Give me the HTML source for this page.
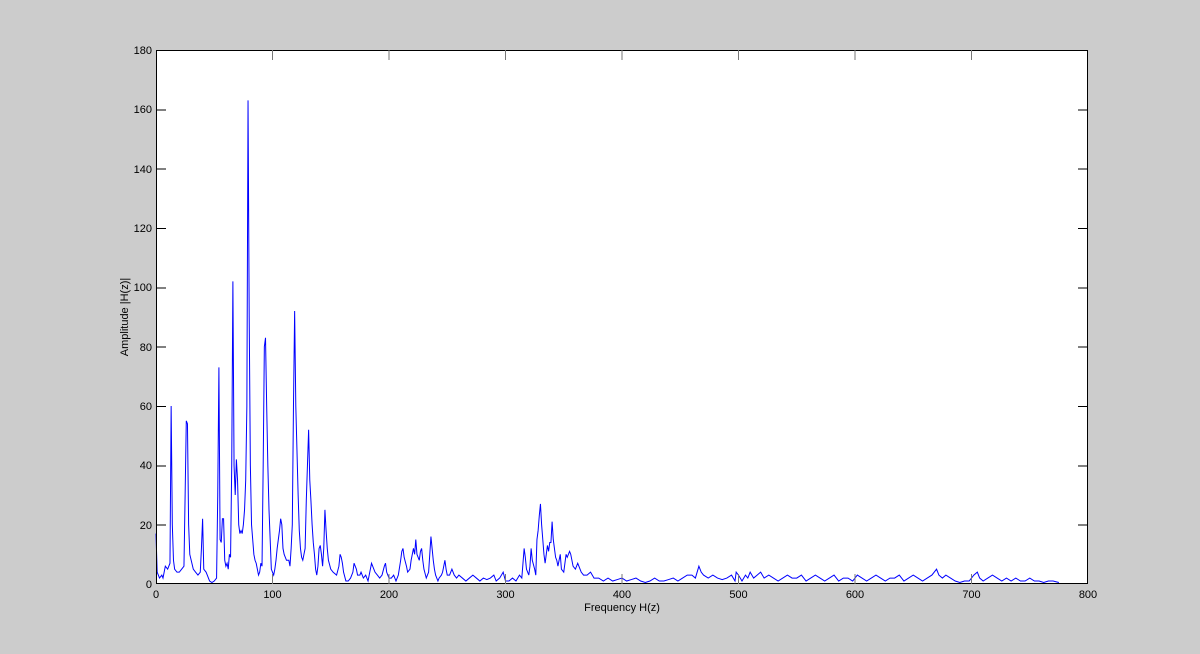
<!DOCTYPE html>
<html><head><style>
html,body{margin:0;padding:0;background:#cccccc;}
svg{display:block;font-family:"Liberation Sans",Arial,sans-serif;font-size:11px;}
</style></head><body>
<svg width="1200" height="654" viewBox="0 0 1200 654">
<rect x="0" y="0" width="1200" height="654" fill="#cccccc"/>
<rect x="156" y="50" width="932" height="534" fill="#fff"/>
<g transform="translate(156,584) scale(1.165,-2.9667)">
<polyline fill="none" stroke="#0000ff" stroke-width="1" vector-effect="non-scaling-stroke" points="
0,17 1,4 2,3 3,2 5,3 6,2 8,6 10,5 12,7 13,60 14,20 15,8 16,5 18,4 20,4 22,5 24,6 25,30 26,55 27,54 28,20 29,10 32,5 34,4 36,3 38,4 39,12 40,22 41,5 43,4 44,3 46,1 48,0.5 50,1 52,2 53,30 54,73 55,15 56,14 57,22 58,22 59,8 60,6 61,7 62,5 63,10 64,9 65,40 66,102 67,40 68,30 69,42 70,35 71,20 72,17 73,18 74,17 75,20 76,25 77,35 78,60 79,163 80,90 81,40 82,20 83,15 84,10 85,8 86,7 87,5 88,3 89,4 90,7 91,6 92,40 93,80 94,83 95,60 96,40 97,25 98,15 99,5 100,4 101,3 102,5 103,8 104,12 105,15 106,18 107,22 108,20 109,12 110,10 111,9 112,8 114,8 115,6 116,12 117,20 118,60 119,92 120,60 121,45 122,30 123,18 124,12 125,9 126,8 127,10 128,12 129,28 130,40 131,52 132,35 133,28 134,20 135,14 136,10 137,5 138,3 139,6 140,12 141,13 142,10 143,6 144,12 145,25 146,18 147,12 148,8 150,5 152,4 155,3 157,6 158,10 159,9 160,7 161,4 163,1 165,1 167,2 169,4 170,7 172,5 173,3 175,3 176,4 178,2 180,3 182,1 184,5 185,7 187,5 188,4 190,3 192,2 194,3 196,6 197,7 198,4 200,2 202,2 204,3 206,1 208,3 210,8 211,11 212,12 213,9 215,6 216,4 218,5 219,8 221,12 222,10 223,15 224,10 226,8 227,11 228,12 229,8 230,5 232,2 233,3 234,4 235,10 236,16 237,12 238,8 239,5 240,3 242,1 243,2 245,3 246,4 247,6 248,8 249,5 250,3 252,3 254,5 256,3 258,2 260,3 263,2 266,1 269,2 272,3 275,2 278,1 281,2 284,1.5 287,2 290,3 292,1 295,2 298,4 300,1 303,1 306,2 309,1 312,3 314,2 316,12 317,9 318,5 320,3 321,6 322,12 323,8 325,5 326,3 327,15 328,18 329,23 330,27 331,20 332,15 333,10 334,7 335,10 336,13 337,11 338,14 339,14 340,21 341,15 342,12 343,9 344,8 345,6 346,8 347,10 348,5 350,4 352,10 353,9 355,11 356,10 358,6 360,5 362,7 363,6 365,4 367,3 370,3 373,4 376,2 380,2 384,1 388,2 392,1 396,1.5 400,2 404,1 408,1.5 412,2 416,1 420,0.5 424,1 428,2 432,1 436,1 440,1.5 444,2 448,1 452,2 456,3 460,3 463,2 466,6 468,4 470,3 474,2 478,3 482,2 486,1.5 490,2 494,3 497,1 498,4 500,3 503,1 506,3 508,2 510,4 513,2 516,3 519,4 522,2 526,3 530,2 534,1 538,2 542,3 546,2 550,2 554,3 558,1 562,2 566,3 570,2 574,1 578,2 582,3 586,1 590,2 594,2 598,1 602,3 606,2 610,1 614,2 618,3 622,2 626,1 630,2 634,2 638,3 642,1 646,2 650,3 654,2 658,1 662,2 666,3 670,5 672,3 675,2 678,3 682,2 686,1 690,0.5 694,1 698,1 702,3 705,4 707,2 710,1 714,2 718,3 722,2 726,1 730,2 734,1 738,2 742,1 746,1 750,2 754,1 758,1 762,0.5 766,1 770,1 775,0.5"/>
</g>
<g stroke="#000" stroke-width="1" fill="none" shape-rendering="crispEdges">
<rect x="156.5" y="50.5" width="931" height="533"/>
<path d="M156 50.5h10M156 109.8h10M156 169.2h10M156 228.5h10M156 287.8h10M156 347.2h10M156 406.5h10M156 465.8h10M156 525.2h10
M1088 50.5h-10M1088 109.8h-10M1088 169.2h-10M1088 228.5h-10M1088 287.8h-10M1088 347.2h-10M1088 406.5h-10M1088 465.8h-10M1088 525.2h-10"/>
</g>
<g stroke="#777" stroke-width="1" fill="none" shape-rendering="crispEdges">
<path d="M272.5 584v-10M389 584v-10M505.5 584v-10M622 584v-10M738.5 584v-10M855 584v-10M971.5 584v-10
M272.5 50v10M389 50v10M505.5 50v10M622 50v10M738.5 50v10M855 50v10M971.5 50v10"/>
</g>
<g fill="#000" text-anchor="end">
<text x="152" y="54">180</text><text x="152" y="113">160</text><text x="152" y="173">140</text><text x="152" y="232">120</text><text x="152" y="291">100</text><text x="152" y="351">80</text><text x="152" y="410">60</text><text x="152" y="469">40</text><text x="152" y="529">20</text><text x="152" y="588">0</text>
</g>
<g fill="#000" text-anchor="middle">
<text x="156" y="598">0</text><text x="272.5" y="598">100</text><text x="389" y="598">200</text><text x="505.5" y="598">300</text><text x="622" y="598">400</text><text x="738.5" y="598">500</text><text x="855" y="598">600</text><text x="971.5" y="598">700</text><text x="1088" y="598">800</text>
<text x="622" y="611">Frequency H(z)</text>
<text transform="translate(128,317) rotate(-90)">Amplitude |H(z)|</text>
</g>
</svg>
</body></html>
